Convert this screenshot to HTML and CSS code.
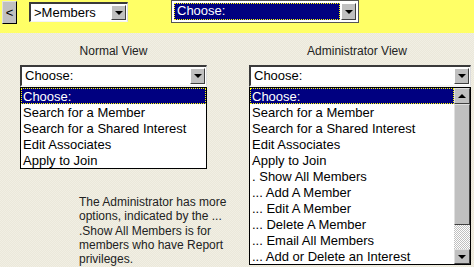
FILE: index.html
```html
<!DOCTYPE html>
<html lang="en">
<head>
    <meta charset="UTF-8">
    <title>Members - Menu Help</title>
    <link rel="stylesheet" href="styles.css">
</head>
<body>
    <div class="topbar">
        <div class="back-button">&lt;</div>
        <div class="combo combo-members">
            <span class="combo-text">&gt;Members</span>
            <span class="drop-button"><span class="arrow-down"></span></span>
        </div>
        <div class="combo combo-top">
            <span class="combo-text selected">Choose:</span>
            <span class="drop-button"><span class="arrow-down"></span></span>
        </div>
    </div>

    <div class="page">
        <div class="column column-normal">
            <div class="view-label">Normal View</div>
            <div class="combo">
                <span class="combo-text">Choose:</span>
                <span class="drop-button"><span class="arrow-down"></span></span>
            </div>
            <div class="list">
                <div class="list-items">
                    <div class="item active">Choose:</div>
                    <div class="item">Search for a Member</div>
                    <div class="item">Search for a Shared Interest</div>
                    <div class="item">Edit Associates</div>
                    <div class="item">Apply to Join</div>
                </div>
            </div>
            <p class="note">The Administrator has more options, indicated by the ... .Show All Members is for members who have Report privileges.</p>
        </div>

        <div class="column column-admin">
            <div class="view-label">Administrator View</div>
            <div class="combo">
                <span class="combo-text">Choose:</span>
                <span class="drop-button"><span class="arrow-down"></span></span>
            </div>
            <div class="list">
                <div class="list-items">
                    <div class="item active">Choose:</div>
                    <div class="item">Search for a Member</div>
                    <div class="item">Search for a Shared Interest</div>
                    <div class="item">Edit Associates</div>
                    <div class="item">Apply to Join</div>
                    <div class="item">. Show All Members</div>
                    <div class="item">... Add A Member</div>
                    <div class="item">... Edit A Member</div>
                    <div class="item">... Delete A Member</div>
                    <div class="item">... Email All Members</div>
                    <div class="item">... Add or Delete an Interest</div>
                </div>
                <div class="scrollbar">
                    <div class="scroll-button"><span class="arrow-up"></span></div>
                    <div class="scroll-thumb"></div>
                    <div class="scroll-track"></div>
                    <div class="scroll-button scroll-button-last"><span class="arrow-down"></span></div>
                </div>
            </div>
        </div>
    </div>
</body>
</html>
```

FILE: styles.css
```css
body {
    margin: 0;
    width: 474px;
    height: 267px;
    overflow: hidden;
    font-family: "Liberation Sans", Arial, sans-serif;
    font-size: 13px;
    color: #000;
    background-color: #efede1;
    background-image: repeating-conic-gradient(#ebe8da 0 25%, #f1efe4 0 50%);
    background-size: 2px 2px;
}
.topbar {
    height: 33px;
    background-color: #ffff66;
    display: flex;
    align-items: flex-start;
    box-sizing: border-box;
    padding-top: 1px;
}
.back-button {
    width: 15px;
    height: 23px;
    margin-left: 2px;
    box-sizing: border-box;
    background-color: #c0c0c0;
    border-top: 1px solid #dfdfdf;
    border-left: 1px solid #dfdfdf;
    border-right: 1px solid #000;
    border-bottom: 1px solid #000;
    line-height: 21px;
    text-align: center;
    color: #000;
}
.combo {
    height: 22px;
    box-sizing: border-box;
    border-top: 2px solid #3a3a3a;
    border-left: 2px solid #3a3a3a;
    border-right: 1px solid #dcdcdc;
    border-bottom: 2px solid #f4f4f4;
    background-color: #fff;
    display: flex;
    align-items: stretch;
}
.combo-members {
    width: 99px;
    height: 20px;
    margin-top: 1px;
    margin-left: 12px;
    border-bottom-width: 1px;
}
.combo-top {
    width: 186px;
    height: 21px;
    margin-left: 44px;
    border-color: #fff;
    border-width: 1px;
    box-shadow: 0 0 0 1px #555;
}
.combo-text {
    flex: 1;
    padding-left: 3px;
    line-height: 17px;
    white-space: nowrap;
    overflow: hidden;
}
.combo-text.selected {
    background-color: #000080;
    color: #fff;
    outline: 1px dotted #ffff00;
    outline-offset: -1px;
    margin: 1px;
    line-height: 15px;
}
.drop-button {
    width: 15px;
    margin: 1px 1px 1px 0;
    box-sizing: border-box;
    background-color: #c0c0c0;
    border-top: 1px solid #fff;
    border-left: 1px solid #fff;
    border-right: 1px solid #404040;
    border-bottom: 1px solid #404040;
    display: flex;
    align-items: center;
    justify-content: center;
}
.arrow-down {
    width: 0;
    height: 0;
    border-left: 4px solid transparent;
    border-right: 4px solid transparent;
    border-top: 4px solid #000;
}
.arrow-up {
    width: 0;
    height: 0;
    border-left: 4px solid transparent;
    border-right: 4px solid transparent;
    border-bottom: 4px solid #000;
}
.page {
    display: flex;
    padding-left: 20px;
    gap: 42px;
}
.column {
    display: flex;
    flex-direction: column;
}
.column-normal {
    width: 187px;
}
.column-admin {
    width: 222px;
}
.view-label {
    font-size: 12px;
    line-height: 14px;
    color: #222;
    text-align: center;
    margin-top: 11px;
    margin-bottom: 7px;
}
.column-admin .view-label {
    padding-right: 6px;
}
.list {
    border: 1px solid #000;
    background-color: #fff;
    display: flex;
}
.list-items {
    flex: 1;
}
.item {
    height: 16px;
    box-sizing: border-box;
    padding: 2px 0 0 2px;
    line-height: 14px;
    white-space: nowrap;
}
.item.active {
    background-color: #000080;
    color: #fff;
    outline: 1px dotted #ffff00;
    outline-offset: -1px;
}
.scrollbar {
    width: 16px;
    display: flex;
    flex-direction: column;
}
.scroll-button {
    height: 16px;
    box-sizing: border-box;
    background-color: #c0c0c0;
    border-top: 1px solid #dfdfdf;
    border-left: 1px solid #dfdfdf;
    border-right: 1px solid #404040;
    border-bottom: 1px solid #404040;
    display: flex;
    align-items: center;
    justify-content: center;
}
.scroll-button-last {
    height: 15px;
}
.scroll-thumb {
    height: 121px;
    box-sizing: border-box;
    background-color: #c0c0c0;
    border-top: 1px solid #dfdfdf;
    border-left: 1px solid #dfdfdf;
    border-right: 1px solid #404040;
    border-bottom: 1px solid #404040;
}
.scroll-track {
    height: 24px;
    background-image: repeating-conic-gradient(#c0c0c0 0 25%, #fff 0 50%);
    background-size: 2px 2px;
}
.note {
    margin: 26px 0 0 59px;
    width: 160px;
    font-size: 12px;
    line-height: 14.3px;
    color: #222;
}
```
